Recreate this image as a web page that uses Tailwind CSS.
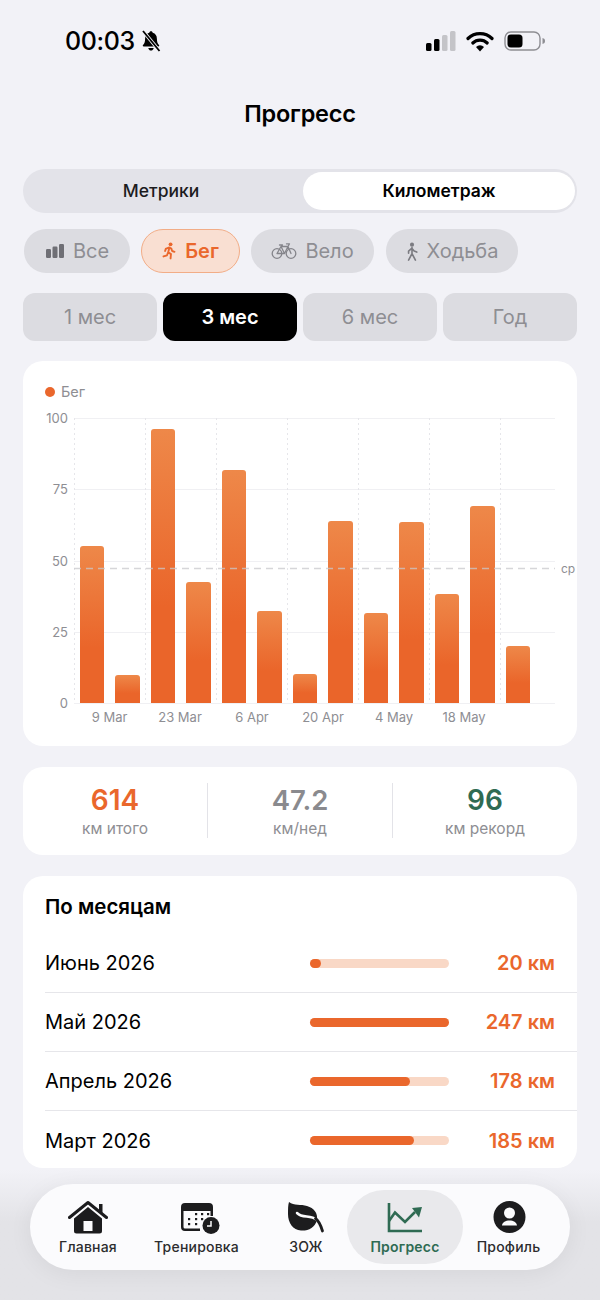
<!DOCTYPE html>
<html lang="en">
<head>
<meta charset="UTF-8">
<title>Прогресс</title>
<script src="https://cdn.jsdelivr.net/npm/@tailwindcss/browser@4"></script>
</head>
<body class="bg-[#f2f2f7]">
<div class="relative w-[600px] h-[1300px] overflow-hidden bg-[#f2f2f7] text-black [font-family:Inter,sans-serif]">

  <!-- status bar -->
  <div class="h-[82px] pl-[65px] pr-[54px] pt-[26px] flex justify-between items-start">
    <div class="flex items-center gap-[6px] h-[30px]">
      <span class="text-[25px] font-medium leading-[30px] tracking-[-0.4px]">00:03</span>
      <svg width="20" height="22" viewBox="0 0 20 22"><path d="M10 1.2c1 0 1.6.7 1.7 1.6 2.8.7 4.2 3 4.2 5.9 0 3.4.8 5 2.1 6.4.5.6.2 1.4-.7 1.4H2.7c-.9 0-1.2-.8-.7-1.4 1.3-1.4 2.1-3 2.1-6.4 0-2.9 1.4-5.2 4.2-5.9.1-.9.7-1.6 1.7-1.600zM7.300 18h5.400c-.2 1.500-1.300 2.600-2.700 2.600S7.500 19.500 7.300 18z" fill="#000"/><path d="M2 1l16.500 20" stroke="#f2f2f7" stroke-width="3.500"/><path d="M2 1l16.500 20" stroke="#000" stroke-width="1.800"/></svg>
    </div>
    <div class="flex items-center h-[30px]">
      <svg width="31" height="22" viewBox="0 0 31 22"><rect x="1" y="13" width="5.500" height="8" rx="1.500" fill="#000"/><rect x="9" y="9" width="5.500" height="12" rx="1.500" fill="#000"/><rect x="17" y="5" width="5.500" height="16" rx="1.500" fill="#c4c4c8"/><rect x="25" y="1" width="5.500" height="20" rx="1.500" fill="#c4c4c8"/></svg>
      <svg class="ml-[10px]" width="28" height="21" viewBox="0 0 28 21"><path d="M2 7.500a17 17 0 0 1 24 0" fill="none" stroke="#000" stroke-width="3.200" stroke-linecap="round"/><path d="M6.800 12a10.300 10.300 0 0 1 14.400 0" fill="none" stroke="#000" stroke-width="3.200" stroke-linecap="round"/><path d="M14 20.500l-4-4.600a5.800 5.800 0 0 1 8 0z" fill="#000"/></svg>
      <svg class="ml-[10px]" width="42" height="20" viewBox="0 0 42 20"><rect x="1" y="1" width="35" height="18" rx="6" fill="none" stroke="#8e8e93" stroke-width="1.400"/><rect x="3.500" y="3.500" width="15" height="13" rx="3.500" fill="#000"/><path d="M38.500 7c1.800.4 2.500 1.500 2.500 3s-.7 2.600-2.500 3z" fill="#8e8e93"/></svg>
    </div>
  </div>

  <!-- title -->
  <h1 class="h-[64px] text-center text-[23.5px] leading-[64px] font-semibold tracking-[-0.2px]">Прогресс</h1>

  <div class="px-[23px] pt-[23px] flex flex-col">
    <!-- tabs -->
    <div class="h-[44px] rounded-[22px] bg-[#e3e3e9] flex p-[3px] pr-[2px] text-[17.5px]">
      <div class="w-[277px] pr-[7px] flex items-center justify-center font-medium text-[#1c1c1e]">Метрики</div>
      <div class="flex-1 rounded-[20px] bg-white flex items-center justify-center font-semibold">Километраж</div>
    </div>

    <!-- sport chips -->
    <div class="mt-[16px] h-[44px] flex text-[20px] text-[#8e8e93]">
      <div class="w-[106px] ml-[1px] rounded-[22px] bg-[#dcdce1] flex items-center justify-center gap-[8px]">
        <svg width="20" height="16" viewBox="0 0 20 16"><rect x="1" y="6" width="5" height="9" rx="1.200" fill="#6f6f75"/><rect x="7.500" y="3.500" width="5" height="11.500" rx="1.200" fill="#6f6f75"/><rect x="14" y="1" width="5" height="14" rx="1.200" fill="#6f6f75"/></svg>
        <span>Все</span>
      </div>
      <div class="w-[99px] ml-[11px] rounded-[22px] bg-[#f9dfd2] border border-[#f2ad87] flex items-center justify-center gap-[9px] text-[#ea672c] font-semibold">
        <svg width="14" height="18" viewBox="0 0 17 23"><circle cx="10.500" cy="3" r="2.400" fill="#ea672c"/><path d="M5 8.500l4-1.500 2.500 1.500 1 3 3 1M9 7.500L7.500 13l3.500 2.500-.5 5.500M7 14l-1 3-4.500 1.500M4.500 8.500L3.500 11.500" fill="none" stroke="#ea672c" stroke-width="2.400" stroke-linecap="round" stroke-linejoin="round"/></svg>
        <span>Бег</span>
      </div>
      <div class="w-[123px] ml-[11px] rounded-[22px] bg-[#dcdce1] flex items-center justify-center gap-[8px]">
        <svg width="26" height="18" viewBox="0 0 26 18"><g fill="none" stroke="#85858b" stroke-width="1.300" stroke-linecap="round" stroke-linejoin="round"><circle cx="6" cy="11.500" r="4.800"/><circle cx="20" cy="11.500" r="4.800"/><path d="M6 11.500L10 4.500h7l3 7M10 4.500l3.500 7H6M13.500 11.500L17 4.500M15.500 1.800h3l-1.500 2.700M8.500 3h3"/></g></svg>
        <span>Вело</span>
      </div>
      <div class="w-[132px] ml-[12px] rounded-[22px] bg-[#dcdce1] flex items-center justify-center gap-[9px]">
        <svg width="12" height="19" viewBox="0 0 14 22"><circle cx="7" cy="3" r="2.400" fill="#7b7b81"/><path d="M7 6.500v7M7 7L3 10.500v2.500M7 7.500l2.500 3 3 1.200M7 13.500L3 21M7 13.500l4 7.500" fill="none" stroke="#7b7b81" stroke-width="1.900" stroke-linecap="round" stroke-linejoin="round"/></svg>
        <span>Ходьба</span>
      </div>
    </div>

    <!-- period -->
    <div class="mt-[20px] h-[48px] grid grid-cols-4 gap-[6px] text-[20px] text-[#8e8e93]">
      <div class="rounded-[12px] bg-[#dcdce1] flex items-center justify-center">1 мес</div>
      <div class="rounded-[12px] bg-black text-white font-semibold flex items-center justify-center">3 мес</div>
      <div class="rounded-[12px] bg-[#dcdce1] flex items-center justify-center">6 мес</div>
      <div class="rounded-[12px] bg-[#dcdce1] flex items-center justify-center">Год</div>
    </div>

    <!-- chart card -->
    <div class="mt-[20px] h-[385px] rounded-[20px] bg-white overflow-hidden">
      <svg width="554" height="385" viewBox="23 361 554 385" class="block" font-family="Inter, sans-serif">
        <defs>
          <linearGradient id="bar" x1="0" y1="0" x2="0" y2="1">
            <stop offset="0" stop-color="#ee8849"/>
            <stop offset="0.65" stop-color="#ea652a"/>
            <stop offset="1" stop-color="#ea652a"/>
          </linearGradient>
        </defs>
        <circle cx="50" cy="392" r="5" fill="#ea672c"/>
        <text x="61" y="397" font-size="14.500" fill="#8e8e93">Бег</text>

        <g stroke="#f0f0f3" stroke-width="1">
          <path d="M74 418.500H555M74 489.500H555M74 561.500H555M74 632.500H555M74 703.500H555"/>
        </g>
        <g stroke="#e6e6ea" stroke-width="1" stroke-dasharray="2 3">
          <path d="M74.500 418V703M145.500 418V703M216.500 418V703M287.500 418V703M358.500 418V703M429.500 418V703M500.500 418V703"/>
        </g>

        <g font-size="13" fill="#8e8e93" text-anchor="end">
          <text x="68" y="423">100</text>
          <text x="68" y="494">75</text>
          <text x="68" y="566">50</text>
          <text x="68" y="637">25</text>
          <text x="68" y="708">0</text>
        </g>

        <g fill="url(#bar)">
          <path d="M80 703V549a3 3 0 0 1 3-3h18a3 3 0 0 1 3 3V703z"/>
          <path d="M115 703V678a3 3 0 0 1 3-3h19a3 3 0 0 1 3 3V703z"/>
          <path d="M151 703V432a3 3 0 0 1 3-3h18a3 3 0 0 1 3 3V703z"/>
          <path d="M186 703V585a3 3 0 0 1 3-3h19a3 3 0 0 1 3 3V703z"/>
          <path d="M222 703V473a3 3 0 0 1 3-3h18a3 3 0 0 1 3 3V703z"/>
          <path d="M257 703V614a3 3 0 0 1 3-3h19a3 3 0 0 1 3 3V703z"/>
          <path d="M293 703V677a3 3 0 0 1 3-3h18a3 3 0 0 1 3 3V703z"/>
          <path d="M328 703V524a3 3 0 0 1 3-3h19a3 3 0 0 1 3 3V703z"/>
          <path d="M364 703V616a3 3 0 0 1 3-3h18a3 3 0 0 1 3 3V703z"/>
          <path d="M399 703V525a3 3 0 0 1 3-3h19a3 3 0 0 1 3 3V703z"/>
          <path d="M435 703V597a3 3 0 0 1 3-3h18a3 3 0 0 1 3 3V703z"/>
          <path d="M470 703V509a3 3 0 0 1 3-3h19a3 3 0 0 1 3 3V703z"/>
          <path d="M506 703V649a3 3 0 0 1 3-3h18a3 3 0 0 1 3 3V703z"/>
        </g>

        <path d="M74 568.500H555" stroke="#c8c8cc" stroke-opacity="0.75" stroke-width="1.500" stroke-dasharray="7 5"/>
        <text x="561" y="573" font-size="12" fill="#8e8e93">ср</text>

        <g font-size="13" fill="#8e8e93" text-anchor="middle">
          <text x="109.500" y="722">9 Mar</text>
          <text x="180" y="722">23 Mar</text>
          <text x="252" y="722">6 Apr</text>
          <text x="323" y="722">20 Apr</text>
          <text x="394" y="722">4 May</text>
          <text x="464" y="722">18 May</text>
        </g>
      </svg>
    </div>

    <!-- stats -->
    <div class="mt-[21px] h-[88px] rounded-[20px] bg-white flex items-start pt-[16px]">
      <div class="w-[185px] h-[55px] border-r border-[#e3e3e8] flex flex-col items-center">
        <span class="text-[28px] leading-[35px] font-semibold text-[#ea672c]">614</span>
        <span class="text-[15.5px] leading-[22px] text-[#8e8e93]">км итого</span>
      </div>
      <div class="w-[185px] h-[55px] border-r border-[#e3e3e8] flex flex-col items-center">
        <span class="text-[27.5px] leading-[35px] font-semibold text-[#8a8a8e]">47.2</span>
        <span class="text-[15.5px] leading-[22px] text-[#8e8e93]">км/нед</span>
      </div>
      <div class="flex-1 h-[55px] flex flex-col items-center">
        <span class="text-[28px] leading-[35px] font-semibold text-[#2f6b53]">96</span>
        <span class="text-[15.5px] leading-[22px] text-[#8e8e93]">км рекорд</span>
      </div>
    </div>

    <!-- months -->
    <div class="mt-[21px] h-[292px] rounded-[20px] bg-white pl-[22px] pt-[17px]">
      <h2 class="h-[41px] text-[20.5px] leading-[28px] font-semibold">По месяцам</h2>
      <div class="h-[59px] pr-[22px] flex items-center border-b border-[#e6e6ea] text-[20px]">
        <span class="w-[265px]">Июнь 2026</span>
        <div class="w-[139px] h-[9px] rounded-full bg-[#f9d8c6]"><div class="h-full rounded-full bg-[#ea672c]" style="width:8%"></div></div>
        <span class="flex-1 text-right font-semibold text-[#ea672c]">20 км</span>
      </div>
      <div class="h-[59px] pr-[22px] flex items-center border-b border-[#e6e6ea] text-[20px]">
        <span class="w-[265px]">Май 2026</span>
        <div class="w-[139px] h-[9px] rounded-full bg-[#f9d8c6]"><div class="h-full rounded-full bg-[#ea672c]" style="width:100%"></div></div>
        <span class="flex-1 text-right font-semibold text-[#ea672c]">247 км</span>
      </div>
      <div class="h-[59px] pr-[22px] flex items-center border-b border-[#e6e6ea] text-[20px]">
        <span class="w-[265px]">Апрель 2026</span>
        <div class="w-[139px] h-[9px] rounded-full bg-[#f9d8c6]"><div class="h-full rounded-full bg-[#ea672c]" style="width:72%"></div></div>
        <span class="flex-1 text-right font-semibold text-[#ea672c]">178 км</span>
      </div>
      <div class="h-[59px] pr-[22px] flex items-center text-[20px]">
        <span class="w-[265px]">Март 2026</span>
        <div class="w-[139px] h-[9px] rounded-full bg-[#f9d8c6]"><div class="h-full rounded-full bg-[#ea672c]" style="width:75%"></div></div>
        <span class="flex-1 text-right font-semibold text-[#ea672c]">185 км</span>
      </div>
    </div>
  </div>

  <!-- tab bar, floats over the page -->
  <div class="absolute left-0 right-0 bottom-0 h-[130px] bg-gradient-to-b from-[#f2f2f7]/0 to-[#e3e3e7] to-40%"></div>
  <nav class="absolute left-[30px] top-[1184px] w-[540px] h-[86px] rounded-[43px] bg-[#fbfbfd] shadow-[0_4px_24px_rgba(0,0,0,0.06)] flex items-center text-[14px] tracking-[0.2px] font-medium text-[#2c2c2e]">
    <div class="absolute left-[317px] top-[6px] w-[116px] h-[74px] rounded-[37px] bg-[#e9e9ec]"></div>
    <div class="relative w-[116px] flex flex-col items-center">
      <svg width="40" height="36" viewBox="0 0 40 36"><path d="M1.500 19.500L20 4.500l18.500 15" fill="none" stroke="#1c1c1e" stroke-width="3" stroke-linecap="round" stroke-linejoin="round"/><path d="M31 6h3.500v9L31 12z" fill="#1c1c1e"/><path fill-rule="evenodd" d="M20 9L6 20.500V33a2.500 2.500 0 0 0 2.500 2.500h23A2.500 2.500 0 0 0 34 33V20.500zM15.500 23h9v10h-9z" fill="#1c1c1e"/></svg>
      <span class="mt-[4px] leading-[18px]">Главная</span>
    </div>
    <div class="relative w-[101px] flex flex-col items-center">
      <svg class="ml-[7px]" width="40" height="36" viewBox="0 0 40 36"><path fill-rule="evenodd" d="M5 5h24a4 4 0 0 1 4 4v9h-2.500v-5H3.500v16a1.500 1.500 0 0 0 1.500 1.500h15V33H5a4 4 0 0 1-4-4V9a4 4 0 0 1 4-4z" fill="#1c1c1e"/><g fill="#1c1c1e"><rect x="15" y="15" width="2.200" height="2.200"/><rect x="21" y="15" width="2.200" height="2.200"/><rect x="27" y="15" width="2.200" height="2.200"/><rect x="8" y="20" width="2.200" height="2.200"/><rect x="15" y="20" width="2.200" height="2.200"/><rect x="21" y="20" width="2.200" height="2.200"/><rect x="8" y="25" width="2.200" height="2.200"/><rect x="15" y="25" width="2.200" height="2.200"/></g><circle cx="31" cy="27.500" r="8.500" fill="#1c1c1e"/><path d="M31 23V28h-4" fill="none" stroke="#fbfbfd" stroke-width="1.500"/></svg>
      <span class="mt-[4px] leading-[18px]">Тренировка</span>
    </div>
    <div class="relative w-[118px] flex flex-col items-center">
      <svg width="40" height="36" viewBox="0 0 40 36"><path d="M3 4C8 8 15 6 21 8c7 2 11 7 10 14-2 8-9 11-16 10.500C7 32 2 25 2 16c0-5 0-9 1-12z" fill="#1c1c1e"/><path d="M11 15c6 6 13 1 20 7" fill="none" stroke="#fbfbfd" stroke-width="2.500" stroke-linecap="round"/><path d="M29.500 20.500c3.500 2.500 5.500 7.500 7 12.500" fill="none" stroke="#1c1c1e" stroke-width="2.800" stroke-linecap="round"/></svg>
      <span class="mt-[4px] leading-[18px]">ЗОЖ</span>
    </div>
    <div class="relative w-[80px] flex flex-col items-center font-semibold text-[#2f6b53]">
      <svg width="40" height="36" viewBox="0 0 40 36"><path d="M4 5V33H37" fill="none" stroke="#2f6b53" stroke-width="2.600"/><path d="M4 23l6-8.500 10 9.500 10-10" fill="none" stroke="#2f6b53" stroke-width="2.600"/><path d="M27 10l10-1-3 10.500z" fill="#2f6b53"/></svg>
      <span class="mt-[4px] leading-[18px] whitespace-nowrap">Прогресс</span>
    </div>
    <div class="relative w-[125px] pl-[2px] flex flex-col items-center">
      <svg width="40" height="36" viewBox="0 0 40 36"><path fill-rule="evenodd" d="M20.500 3a16 16 0 1 1 0 32 16 16 0 0 1 0-32zM20.500 9.500a5.500 5.500 0 1 0 0 11 5.500 5.500 0 0 0 0-11zM20.500 22.500c-4 0-7 1.800-7.500 5h15c-.5-3.200-3.500-5-7.500-5z" fill="#1c1c1e"/></svg>
      <span class="mt-[4px] leading-[18px]">Профиль</span>
    </div>
  </nav>
</div>
</body>
</html>
